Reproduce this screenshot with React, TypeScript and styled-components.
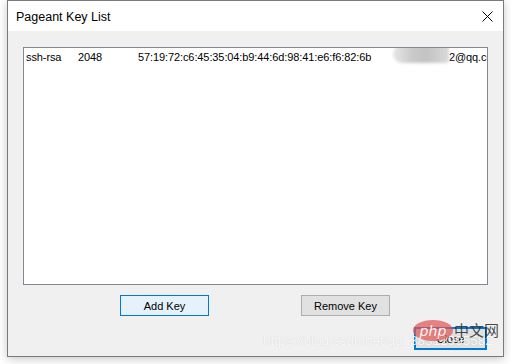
import React from "react";
import styled, { createGlobalStyle } from "styled-components";

const Global = createGlobalStyle`
  html, body { margin: 0; padding: 0; background: #ffffff; }
  body { font-family: "Liberation Sans", Arial, sans-serif; }
  #root { width: 511px; height: 364px; overflow: hidden; }
`;

const Page = styled.div`
  position: relative;
  width: 511px;
  height: 364px;
  padding-left: 7px;
  box-sizing: border-box;
`;

const Window = styled.div`
  width: 497px;
  height: 357px;
  box-sizing: border-box;
  border: 1px solid #7a7a7a;
  display: flex;
  flex-direction: column;
  background: #f0f0f0;
  box-shadow: 0 2px 9px rgba(0, 0, 0, 0.22);
`;

const TitleBar = styled.div`
  height: 30px;
  flex: none;
  background: #ffffff;
  display: flex;
  align-items: center;
  justify-content: space-between;
  padding: 0 10px 0 8px;
`;

const Title = styled.span`
  font-family: "Segoe UI", "Liberation Sans", Arial, sans-serif;
  font-size: 12.5px;
  color: #000;
  margin-top: 1px;
`;

const Content = styled.div`
  flex: 1;
  display: flex;
  flex-direction: column;
  padding: 16px 15px 0 15px;
`;

const ListBox = styled.div`
  position: relative;
  width: 465px;
  height: 238px;
  box-sizing: border-box;
  border: 1px solid #828790;
  background: #ffffff;
  overflow: hidden;
  padding-top: 2px;
`;

const Row = styled.div`
  display: flex;
  align-items: center;
  height: 13px;
  font-family: "Liberation Sans", Arial, sans-serif;
  font-size: 11px;
  letter-spacing: -0.1px;
  color: #000;
  white-space: nowrap;
`;

const Cell = styled.span<{ $w: number }>`
  flex: none;
  box-sizing: border-box;
  width: ${(p) => p.$w}px;
  padding-left: 2px;
  overflow: hidden;
`;

const Blur = styled.span`
  position: absolute;
  left: 369px;
  top: -3px;
  width: 56px;
  height: 18px;
  border-radius: 9px 4px 4px 9px;
  background: linear-gradient(90deg, #e6e6e6 0%, #c9c9c9 35%, #c3c3c3 60%, #d9d9d9 100%);
  filter: blur(1.5px);
`;

const ButtonRow = styled.div`
  display: flex;
  justify-content: center;
  gap: 92px;
  margin-top: 10px;
  padding-right: 1px;
`;

const CloseRow = styled.div`
  display: flex;
  justify-content: flex-end;
  margin-top: 11px;
  padding-right: 1px;
`;

const Button = styled.button<{ $variant?: "focus" | "default" }>`
  box-sizing: border-box;
  width: ${(p) => (p.$variant === "default" ? 73 : 89)}px;
  height: ${(p) => (p.$variant === "default" ? 23 : 21)}px;
  margin: 0;
  padding: 0;
  font-family: "Liberation Sans", Arial, sans-serif;
  font-size: 11px;
  color: #000;
  border: ${(p) =>
    p.$variant === "focus"
      ? "1px solid #0078d7"
      : p.$variant === "default"
      ? "2px solid #0078d7"
      : "1px solid #adadad"};
  background: ${(p) => (p.$variant === "focus" ? "#e5f1fb" : "#e1e1e1")};
  outline: none;
`;

const Watermark = styled.div`
  position: absolute;
  left: 263px;
  top: 333px;
  font-family: "Liberation Sans", Arial, sans-serif;
  font-size: 13.5px;
  color: rgba(255, 255, 255, 0.9);
  text-shadow: 0 0 1px rgba(0, 0, 0, 0.18);
  white-space: nowrap;
  pointer-events: none;
`;

const PhpLogo = styled.div`
  position: absolute;
  left: 413px;
  top: 320px;
  width: 40px;
  height: 21px;
  border-radius: 50%;
  background: rgba(226, 86, 86, 0.72);
  display: flex;
  align-items: center;
  justify-content: center;
  font-family: "DejaVu Sans", "Liberation Sans", sans-serif;
  font-size: 14px;
  font-style: italic;
  color: rgba(255, 255, 255, 0.95);
  letter-spacing: 0.2px;
  pointer-events: none;
`;

const CnText = styled.div`
  position: absolute;
  left: 454px;
  top: 321px;
  font-family: "Noto Sans CJK SC", sans-serif;
  font-size: 15px;
  line-height: 18px;
  color: rgba(40, 40, 40, 0.85);
  white-space: nowrap;
  pointer-events: none;
`;

export default function App() {
  return (
    <>
      <Global />
      <Page>
        <Window>
          <TitleBar>
            <Title>Pageant Key List</Title>
            <svg width="11" height="11" viewBox="0 0 11 11">
              <path d="M0.5 0.5 L10.5 10.5 M10.5 0.5 L0.5 10.5" stroke="#000" strokeWidth="1" fill="none" />
            </svg>
          </TitleBar>
          <Content>
            <ListBox>
              <Row>
                <Cell $w={52}>ssh-rsa</Cell>
                <Cell $w={60}>2048</Cell>
                <Cell $w={255}>57:19:72:c6:45:35:04:b9:44:6d:98:41:e6:f6:82:6b</Cell>
                <Cell $w={56}> </Cell>
                <Cell $w={40}>2@qq.com</Cell>
              </Row>
              <Blur />
            </ListBox>
            <ButtonRow>
              <Button $variant="focus">Add Key</Button>
              <Button>Remove Key</Button>
            </ButtonRow>
            <CloseRow>
              <Button $variant="default">Close</Button>
            </CloseRow>
          </Content>
        </Window>
        <Watermark>https://blog.csdn.net/qq_38312995582</Watermark>
        <PhpLogo>php</PhpLogo>
        <CnText>中文网</CnText>
      </Page>
    </>
  );
}
